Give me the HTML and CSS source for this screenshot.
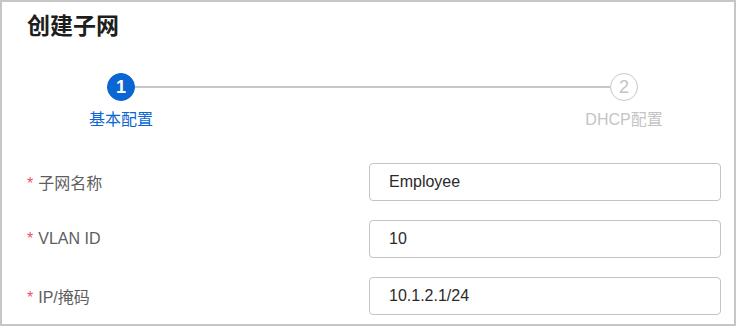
FILE: index.html
```html
<!DOCTYPE html>
<html lang="zh-CN">
<head>
    <meta charset="UTF-8">
    <meta name="viewport" content="width=device-width, initial-scale=1.0">
    <title>创建子网</title>
    <link rel="stylesheet" href="styles.css">
</head>
<body>
    <div class="dialog">
        <h1 class="title">创建子网</h1>

        <div class="steps">
            <div class="step active">
                <div class="step-num">1</div>
                <div class="step-label">基本配置</div>
            </div>
            <div class="step-line"></div>
            <div class="step">
                <div class="step-num">2</div>
                <div class="step-label">DHCP配置</div>
            </div>
        </div>

        <div class="form">
            <div class="form-row">
                <label class="form-label"><span class="req">*</span>子网名称</label>
                <input class="form-input" type="text" value="Employee">
            </div>
            <div class="form-row">
                <label class="form-label"><span class="req">*</span>VLAN ID</label>
                <input class="form-input" type="text" value="10">
            </div>
            <div class="form-row">
                <label class="form-label"><span class="req">*</span>IP/掩码</label>
                <input class="form-input" type="text" value="10.1.2.1/24">
            </div>
        </div>
    </div>
</body>
</html>
```

FILE: styles.css
```css
* {
    box-sizing: border-box;
}

body {
    margin: 0;
    font-family: "Liberation Sans", "Noto Sans CJK SC", sans-serif;
    background: #fff;
}

.dialog {
    width: 736px;
    height: 326px;
    border: 2px solid #c6c6c6;
    padding: 0 13px 0 25px;
    overflow: hidden;
}

.title {
    margin: 8px 0 0;
    font-size: 23px;
    line-height: 32px;
    font-weight: bold;
    color: #1e1e1e;
}

.steps {
    display: grid;
    grid-template-columns: 80px 1fr 80px;
    margin: 31px 57px 0 54px;
}

.step {
    display: flex;
    flex-direction: column;
    align-items: center;
}

.step-num {
    width: 28px;
    height: 28px;
    border-radius: 50%;
    border: 1px solid #c8c8c8;
    color: #c4c4c4;
    font-size: 18px;
    line-height: 26px;
    text-align: center;
}

.step.active .step-num {
    background: #0a66d2;
    border-color: #0a66d2;
    color: #fff;
    font-weight: bold;
}

.step-label {
    margin-top: 7px;
    font-size: 16px;
    line-height: 24px;
    color: #c4c4c4;
    white-space: nowrap;
}

.step.active .step-label {
    color: #0a66d2;
}

.step-line {
    height: 2px;
    background: #c8c8c8;
    margin: 13px -26px 0;
}

.form {
    margin-top: 31px;
    display: flex;
    flex-direction: column;
    gap: 19px;
}

.form-row {
    display: flex;
    align-items: center;
    height: 38px;
}

.form-label {
    width: 342px;
    font-size: 16px;
    color: #5e5e5e;
}

.req {
    color: #f0506e;
    margin-right: 5px;
}

.form-input {
    width: 352px;
    height: 38px;
    border: 1px solid #c4c4c4;
    border-radius: 4px;
    padding: 0 19px;
    font-family: "Liberation Sans", sans-serif;
    font-size: 16px;
    color: #2a2a2a;
    outline: none;
}
```
